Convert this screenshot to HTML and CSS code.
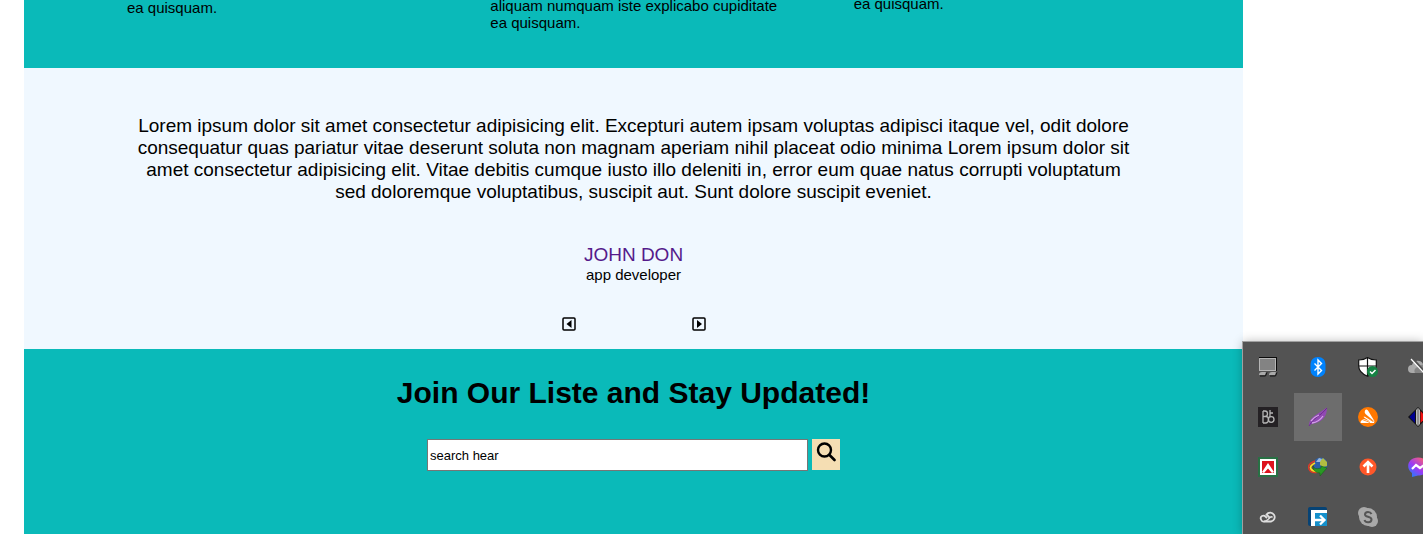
FILE: index.html
```html
<!DOCTYPE html>
<html lang="en">
<head>
<meta charset="utf-8">
<title>Join Our Liste</title>
<link rel="stylesheet" href="styles.css">
</head>
<body>
<main class="page">
  <section class="features">
    <p class="feature feature-first">ea quisquam.</p>
    <p class="feature feature-second">aliquam numquam iste explicabo cupiditate ea quisquam.</p>
    <p class="feature">ea quisquam.</p>
  </section>
  <section class="testimonial">
    <p class="quote">Lorem ipsum dolor sit amet consectetur adipisicing elit. Excepturi autem ipsam voluptas adipisci itaque vel, odit dolore consequatur quas pariatur vitae deserunt soluta non magnam aperiam nihil placeat odio minima Lorem ipsum dolor sit amet consectetur adipisicing elit. Vitae debitis cumque iusto illo deleniti in, error eum quae natus corrupti voluptatum sed doloremque voluptatibus, suscipit aut. Sunt dolore suscipit eveniet.</p>
    <a class="author" href="#">JOHN DON</a>
    <p class="role">app developer</p>
    <div class="arrows">
      <button class="arrow" type="button" aria-label="Previous"><svg viewBox="0 0 14 14" width="14" height="14"><rect x="1" y="1" width="12" height="12" rx="1" fill="none" stroke="#000" stroke-width="1.5"/><path d="M9.500 3v8L4.500 7z"/></svg></button>
      <button class="arrow" type="button" aria-label="Next"><svg viewBox="0 0 14 14" width="14" height="14"><rect x="1" y="1" width="12" height="12" rx="1" fill="none" stroke="#000" stroke-width="1.5"/><path d="M5 3v8l5-4z"/></svg></button>
    </div>
  </section>
  <section class="join">
    <h1 class="join-title">Join Our Liste and Stay Updated!</h1>
    <form class="search">
      <input class="search-box" type="text" value="search hear" aria-label="Search">
      <button class="search-button" type="button" aria-label="Search"><svg viewBox="0 0 20 20" width="20" height="20" fill="none" stroke="#000"><circle cx="8.500" cy="8" r="6.500" stroke-width="2.400"/><path d="M13.500 13l5 5" stroke-width="2.600" stroke-linecap="round"/></svg></button>
    </form>
  </section>
</main>
<aside class="tray" aria-label="System tray">
  <button class="tray-item" type="button" aria-label="Display"><svg viewBox="0 0 20 20" width="20" height="20"><path d="M1 0h18v14H1z" fill="#0b0b0b"/><path d="M1 1h17v13H1z" fill="#b5b5b5"/><path d="M2 2h15v11H2z" fill="#838383"/><path d="M1 18q0-3 3-3h4l-1 3zM11 18q0-3 3-3h4l-1 3z" fill="#aaa"/><path d="M2 19h5.500l1.500-3.500M12 19h5.500l1.500-3.500" fill="none" stroke="#111"/></svg></button>
  <button class="tray-item" type="button" aria-label="Bluetooth"><svg viewBox="0 0 20 20" width="20" height="20"><rect x="2.500" width="15" height="20" rx="7" fill="#0082fc"/><path d="M6.500 6.500l7 7L10 17V3l3.500 3.500-7 7" fill="none" stroke="#fff" stroke-width="1.4"/></svg></button>
  <button class="tray-item" type="button" aria-label="Security"><svg viewBox="0 0 20 20" width="20" height="20"><path d="M.7 3Q6 3 9.500.6 13 3 18.300 3v6q0 6.500-8.800 10.300Q.7 15.500.7 9z" fill="#fff" stroke="#111" stroke-width="1.2"/><path d="M9.500 1v18M1 9h17" stroke="#111" stroke-width="1.2"/><circle cx="14.500" cy="14.500" r="5.500" fill="#158344"/><path d="M12 14.500l2 2 3.500-3.500" fill="none" stroke="#fff" stroke-width="1.5"/></svg></button>
  <button class="tray-item" type="button" aria-label="Cloud storage"><svg viewBox="0 0 20 20" width="20" height="20"><path d="M4 16a4 4 0 0 1 0-8 6 6 0 0 1 11-1 4.500 4.500 0 0 1 0 9z" fill="#aaa"/><path d="M7 16a4 4 0 0 1 4-6 5 5 0 0 1 9 1v5z" fill="#858585"/><path d="M4.500 1.500l14 15" stroke="#535353" stroke-width="2"/><path d="M3 2l14 15" stroke="#fff" stroke-width="1.2"/></svg></button>
  <button class="tray-item" type="button" aria-label="Audio"><svg viewBox="0 0 20 20" width="20" height="20"><path d="M0 0h20v20H0z" fill="#242124"/><path d="M5 4v12M5 4h2q2.500 0 2.500 2.700T7 9.500H5h3q2.500 0 2.500 3T8 16H5M12 3v7M12 6h3" fill="none" stroke="#b5b5b5" stroke-width="1.300"/><circle cx="13.200" cy="12.500" r="2.800" fill="none" stroke="#b5b5b5" stroke-width="1.300"/></svg></button>
  <button class="tray-item tray-item-active" type="button" aria-label="Feather"><svg viewBox="0 0 20 20" width="20" height="20"><path d="M1 19Q1 13 5 10T19 .5Q19 8 15 12T3.500 17z" fill="#9149b4"/><path d="M1 19Q4 13 9 10T19 1" stroke="#6c2e8d" fill="none"/><path d="M3 14q3-4 8-6M4 16q7-1 11-7" stroke="#d3a2e7" stroke-width="1.300" fill="none"/></svg></button>
  <button class="tray-item" type="button" aria-label="Antivirus"><svg viewBox="0 0 20 20" width="20" height="20"><circle cx="10" cy="10" r="10" fill="#ff7800"/><path d="M3 14Q1.500 16 4 16h12q1-1-1-2L7 9.500q-2-.5-1 1l6 4-6-2.500q-2-.5-2 1zM7 3.500q1-2 3 0L17 15 7.500 7Q6 5 7 3.500z" fill="#fff"/><path d="M3 12l9 3.500M5 8l10 6.500" stroke="#ff7800" stroke-width=".8"/></svg></button>
  <button class="tray-item" type="button" aria-label="Diamond"><svg viewBox="0 0 20 20" width="20" height="20"><path d="M0 10L10 0l10 10-10 10z" fill="#111"/><path d="M1.500 10L7 4v12z" fill="#000090"/><path d="M8 3l2-2 2 2v14l-2 2-2-2z" fill="#bbb"/><path d="M10 2v16" stroke="#666"/><path d="M18.500 10L12.500 4v12z" fill="#f01010"/></svg></button>
  <button class="tray-item" type="button" aria-label="Red arrow"><svg viewBox="0 0 20 20" width="20" height="20"><path d="M0 0h20v20H0z" fill="#287044"/><path d="M2 2h16v16H2z" fill="#fff"/><path d="M4 4h12v12H4z" fill="#dd121d"/><path d="M4 15L10 6l6 9-2 1-4-4.500L6 16z" fill="#fff"/></svg></button>
  <button class="tray-item" type="button" aria-label="Download manager"><svg viewBox="0 0 20 20" width="20" height="20"><circle cx="12.500" cy="7.500" r="7" fill="#2c5fa8"/><path d="M12 4l3-3 4 4v4l-4 1-3-2z" fill="#b3bd42"/><path d="M8 5l3-4 3 1-2 3z" fill="#9bb9dc"/><path d="M7 4Q-1 7 1 12t9 3" fill="none" stroke="#df3927" stroke-width="1.500"/><path d="M7 6Q1 9 3 12t8 2" fill="none" stroke="#ffdb24" stroke-width="1.800"/><path d="M5 9q1 4 8 2v-2l6 2-7 8v-3Q5 16 5 9z" fill="#299824" stroke="#155c17" stroke-width=".5"/></svg></button>
  <button class="tray-item" type="button" aria-label="Updater"><svg viewBox="0 0 20 20" width="20" height="20"><circle cx="10" cy="10" r="8.500" fill="#ff5729"/><path d="M10 16V5M5.500 9.500L10 5l4.500 4.500" fill="none" stroke="#fff" stroke-width="2.600"/></svg></button>
  <button class="tray-item" type="button" aria-label="Messenger"><svg viewBox="0 0 20 20" width="20" height="20"><defs><linearGradient id="messenger" x1="0" y1="1" x2=".8" y2="0"><stop stop-color="#098dff"/><stop offset=".5" stop-color="#9b39f5"/><stop offset="1" stop-color="#ff646e"/></linearGradient></defs><path d="M10 .5c13 0 13 18 0 18L4 20v-4C-3 11 0 .5 10 .5z" fill="url(#messenger)"/><path d="M4 12l4-4 4 3 4-3" fill="none" stroke="#fff" stroke-width="2.200"/></svg></button>
  <button class="tray-item" type="button" aria-label="Creative cloud"><svg viewBox="0 0 20 20" width="20" height="20" fill="none" stroke="#ddd" stroke-width="1.800"><path d="M9 11L7.500 9.500Q6 8 4 9T3 12.500 6 14.500h7a4.500 4.500 0 1 0-4.500-7L12 11"/><path d="M6 14.500q2 0 4-2l2-2q1.500-1.500 2.500 0" stroke-width="1.400"/></svg></button>
  <button class="tray-item" type="button" aria-label="File transfer"><svg viewBox="0 0 20 20" width="20" height="20"><rect width="19" height="19" rx="2" fill="#064375"/><path d="M5 5h14v14H5z" fill="#1590cb"/><path d="M3 3h16v3H7v13H3z" fill="#fff"/><path d="M6 13h9M12 8.500l4.500 4.500-4.500 4.500" fill="none" stroke="#fff" stroke-width="2.300"/></svg></button>
  <button class="tray-item" type="button" aria-label="Skype"><svg viewBox="0 0 20 20" width="20" height="20"><circle cx="6" cy="6" r="6" fill="#a9a9a9"/><circle cx="14" cy="14" r="6" fill="#a9a9a9"/><circle cx="10" cy="10" r="9" fill="#a9a9a9"/><path d="M13.500 7Q12.500 5 10 5 7 5 7 7.500c0 3 6.500 1.500 6.500 5 0 3.500-6 3.500-7 .5" fill="none" stroke="#555" stroke-width="2"/></svg></button>
</aside>
</body>
</html>
```
FILE: styles.css
```css
* { box-sizing: border-box; }
body {
  margin: 0;
  overflow: hidden;
  background: #fff;
  color: #000;
  font: 15px/17px "Liberation Sans", Arial, sans-serif;
}
p, h1 { margin: 0; }
button { padding: 0; border: 0; background: none; }
svg { display: block; }
.page {
  display: flow-root;
  min-height: 100vh;
  margin: 0 180px 0 24px;
  background: #0abab9;
}
.features {
  display: grid;
  grid-template-columns: repeat(3, 1fr);
  margin-top: -5px;
  padding: 0 26px 37px 103px;
}
.feature { padding-right: 68px; }
.feature-first { padding-top: 4px; }
.feature-second { padding-top: 2px; }
.testimonial {
  padding: 47px 110px 18px;
  background: #f0f8ff;
  text-align: center;
}
.quote {
  margin-bottom: 40px;
  font-size: 19px;
  line-height: 22px;
}
.author {
  display: block;
  color: #551a8b;
  font-size: 19px;
  line-height: 23px;
  text-decoration: none;
}
.arrows {
  display: flex;
  justify-content: center;
  gap: 116px;
  margin-top: 34px;
}
.join {
  padding: 26px 20px;
  text-align: center;
}
.join-title { font-size: 30px; line-height: 36px; }
.search {
  display: flex;
  justify-content: center;
  gap: 4px;
  margin-top: 28px;
}
.search-box {
  width: 381px;
  height: 32px;
  padding: 1px 2px;
  border: 1px solid #767676;
  background: #fff;
  font: 13px "Liberation Sans", Arial, sans-serif;
}
.search-button {
  display: flex;
  justify-content: center;
  width: 28px;
  height: 31px;
  padding-top: 3px;
  background: #f5deb3;
}
.tray {
  position: absolute;
  top: 342px;
  right: 0;
  bottom: 0;
  display: grid;
  grid-template-columns: repeat(4, 48px);
  grid-auto-rows: 48px;
  gap: 2px;
  width: 180px;
  padding: 1px;
  overflow: hidden;
  background: #535353;
  box-shadow: 0 0 0 1px #a0a0a0, 0 0 10px rgba(0, 0, 0, 0.3);
}
.tray-item { display: grid; place-items: center; }
.tray-item-active { background: #6d6d6d; }
```
